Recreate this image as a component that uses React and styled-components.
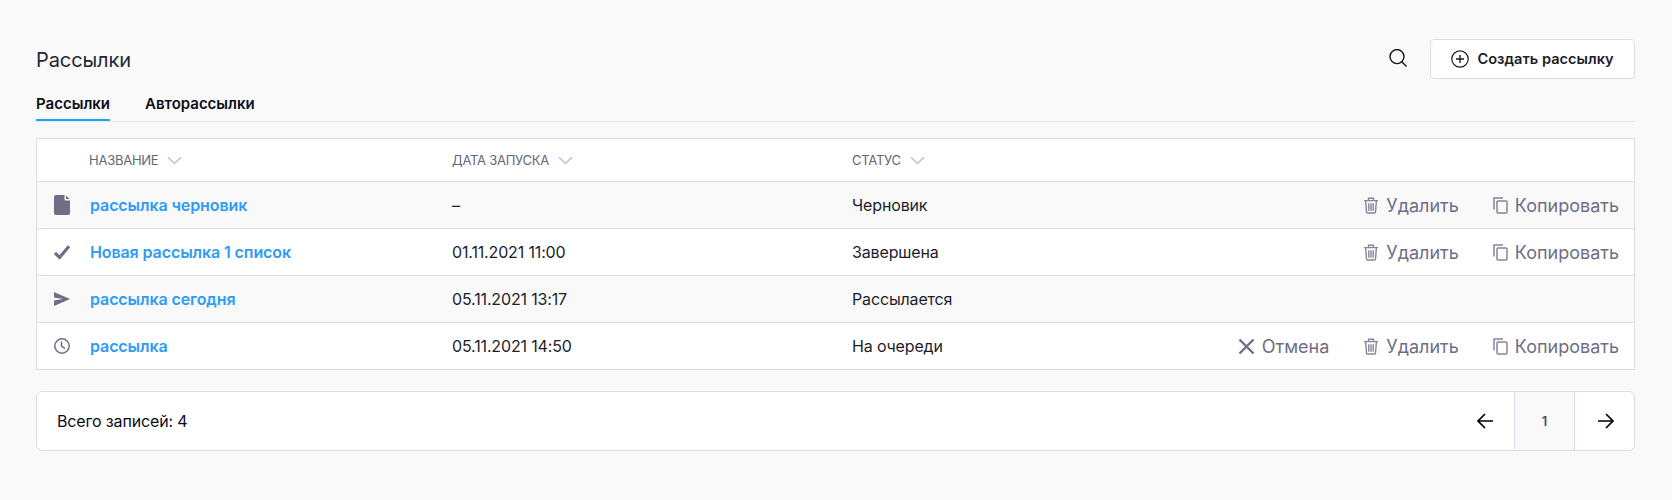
import React from "react";
import styled, { createGlobalStyle } from "styled-components";

const Global = createGlobalStyle`
  html, body { margin: 0; padding: 0; background: #f9f9fa; }
  body { font-family: Inter, "Noto Sans", sans-serif; color: #1d1d2b; }
`;

const Page = styled.div`
  box-sizing: border-box;
  width: 1672px;
  height: 500px;
  padding: 39px 37px 0 36px;
  background: #f9f9fa;
`;
const Head = styled.div`
  display: flex;
  align-items: center;
  height: 40px;
`;
const Title = styled.h1`
  margin: 0;
  padding-top: 2px;
  flex: 1;
  font-size: 20px;
  font-weight: 400;
  letter-spacing: -0.1px;
  line-height: 40px;
  color: #262633;
`;
const SearchBtn = styled.span`
  display: flex;
  margin-right: 23px;
  margin-bottom: 2px;
  color: #111;
`;
const CreateBtn = styled.button`
  box-sizing: border-box;
  width: 205px;
  height: 40px;
  display: flex;
  align-items: center;
  justify-content: center;
  gap: 8px;
  background: #fff;
  border: 1px solid #dcdcea;
  border-radius: 4px;
  font: 600 14.6px Inter, sans-serif;
  color: #1d1d2b;
  padding: 0;
`;
const Tabs = styled.div`
  display: flex;
  gap: 35px;
  height: 42px;
  border-bottom: 1px solid #e7e7ee;
  box-sizing: content-box;
`;
const Tab = styled.div`
  box-sizing: border-box;
  height: 42px;
  padding-top: 15px;
  font-size: 15px;
  font-weight: 600;
  line-height: 20px;
  color: #0c0c14;
  border-bottom: 2px solid ${p => (p.$active ? "#1aa5f5" : "transparent")};
`;
const Table = styled.div`
  margin-top: 16px;
  border: 1px solid #dcdcea;
  background: #fff;
`;
const columns = "52px 363px 400px 1fr";
const HeaderRow = styled.div`
  display: grid;
  grid-template-columns: ${columns};
  height: 42px;
  align-items: center;
`;
const HeadCell = styled.div`
  display: flex;
  align-items: center;
  gap: 9px;
  font-size: 13px;
  letter-spacing: -0.25px;
  color: #656578;
`;
const Row = styled.div`
  display: grid;
  grid-template-columns: ${columns};
  height: 47px;
  align-items: center;
  border-top: 1px solid #dcdcea;
  box-sizing: border-box;
  background: ${p => (p.$odd ? "#f9f9fa" : "#fff")};
  font-size: 16px;
  letter-spacing: -0.15px;
  color: #1d1d2b;
`;
const IconCell = styled.div`
  display: flex;
  justify-content: center;
  padding-right: 2px;
  color: #6e6e85;
`;
const NameLink = styled.a`
  font-weight: 600;
  letter-spacing: -0.1px;
  color: #2d9cf5;
  margin-left: 1px;
`;
const StatusCell = styled.div`
  display: flex;
  align-items: center;
  justify-content: space-between;
`;
const Actions = styled.div`
  display: flex;
  align-items: center;
  gap: 34px;
  padding-right: 15px;
`;
const Action = styled.span`
  display: flex;
  align-items: center;
  gap: 7px;
  font-size: 18px;
  letter-spacing: 0;
  color: #6e6e85;
`;
const Pager = styled.div`
  margin-top: 21px;
  height: 60px;
  box-sizing: border-box;
  display: flex;
  align-items: center;
  background: #fff;
  border: 1px solid #dcdcea;
  border-radius: 6px;
  overflow: hidden;
`;
const Total = styled.div`
  flex: 1;
  padding-left: 20px;
  font-size: 16px;
  letter-spacing: -0.15px;
  color: #0c0c14;
`;
const PageArrow = styled.div`
  box-sizing: border-box;
  width: ${p => (p.$right ? "59px" : "60px")};
  height: 100%;
  display: flex;
  align-items: center;
  justify-content: center;
  padding-left: 2px;
  color: #000;
`;
const PageNum = styled.div`
  box-sizing: border-box;
  width: 61px;
  height: 100%;
  display: flex;
  align-items: center;
  justify-content: center;
  background: #f9f9fa;
  border-left: 1px solid #dcdcea;
  border-right: 1px solid #dcdcea;
  font-size: 13px;
  font-weight: 600;
  color: #4c4c60;
`;

const Chevron = () => (
  <svg width="15" height="9" viewBox="0 0 15 9" fill="none" stroke="#b9c2d6" strokeWidth="1.6">
    <path d="M1 1.2 7.5 7.5 14 1.2" />
  </svg>
);
const DocIcon = () => (
  <svg width="16" height="20" viewBox="0 0 16 20" fill="currentColor">
    <path d="M2 0h8.5v4.5a1 1 0 0 0 1 1H16V18a2 2 0 0 1-2 2H2a2 2 0 0 1-2-2V2a2 2 0 0 1 2-2ZM12 0.4 15.6 4h-3.6Z" />
  </svg>
);
const CheckIcon = () => (
  <svg width="16" height="15" viewBox="0 0 16 15" fill="none" stroke="currentColor" strokeWidth="3.2">
    <path d="M1 8 5.6 12.5 15 1.2" />
  </svg>
);
const SendIcon = () => (
  <svg width="16" height="14" viewBox="0 0 16 14" fill="currentColor">
    <path d="M0 0 16 7 0 14V8.6L9 7 0 5.4Z" />
  </svg>
);
const ClockIcon = () => (
  <svg width="16" height="16" viewBox="0 0 16 16" fill="none" stroke="currentColor" strokeWidth="1.5">
    <circle cx="8" cy="8" r="7.2" />
    <path d="M7.5 3.6V8.2L11 10.6" />
  </svg>
);
const TrashIcon = () => (
  <svg width="16" height="17" viewBox="0 0 16 17" fill="none" stroke="#85859a" strokeWidth="1.4">
    <path d="M1 3.6h14M5.5 3.4V1.2h5v2.2M2.6 3.8l.9 11.2a1 1 0 0 0 1 1h7a1 1 0 0 0 1-1l.9-11.2M5.8 6.2v7.6M8 6.2v7.6M10.2 6.2v7.6" />
  </svg>
);
const CopyIcon = () => (
  <svg width="15" height="17" viewBox="0 0 15 17" fill="none" stroke="#85859a" strokeWidth="1.5">
    <path d="M1 12.5V1h9" />
    <rect x="4" y="4" width="10" height="12" rx="1" />
  </svg>
);
const CrossIcon = () => (
  <svg width="17" height="17" viewBox="0 0 17 17" fill="none" stroke="#6e6e85" strokeWidth="2.4">
    <path d="M1.5 1.5 15.5 15.5M15.5 1.5 1.5 15.5" />
  </svg>
);
const PlusCircle = () => (
  <svg width="18" height="18" viewBox="0 0 18 18" fill="none" stroke="#1d1d2b" strokeWidth="1.2">
    <circle cx="9" cy="9" r="8.2" />
    <path d="M9 5v8M5 9h8" strokeWidth="1.4" />
  </svg>
);
const SearchIcon = () => (
  <svg width="18" height="18" viewBox="0 0 18 18" fill="none" stroke="currentColor" strokeWidth="1.4">
    <circle cx="8" cy="7.6" r="7" />
    <path d="M12.6 12.6 17.5 17.5" />
  </svg>
);
const Arrow = ({ right }) => (
  <svg width="16" height="16" viewBox="0 0 16 16" fill="none" stroke="currentColor" strokeWidth="1.7">
    {right ? <path d="M0 8h15M8 1l7 7-7 7" /> : <path d="M16 8H1M8 1 1 8l7 7" />}
  </svg>
);

const Del = () => <Action><TrashIcon />Удалить</Action>;
const Copy = () => <Action><CopyIcon />Копировать</Action>;
const Cancel = () => <Action><CrossIcon />Отмена</Action>;

const rows = [
  { icon: <DocIcon />, name: "рассылка черновик", date: "–", status: "Черновик", acts: ["d", "c"] },
  { icon: <CheckIcon />, name: "Новая рассылка 1 список", date: "01.11.2021 11:00", status: "Завершена", acts: ["d", "c"] },
  { icon: <SendIcon />, name: "рассылка сегодня", date: "05.11.2021 13:17", status: "Рассылается", acts: [] },
  { icon: <ClockIcon />, name: "рассылка", date: "05.11.2021 14:50", status: "На очереди", acts: ["x", "d", "c"] },
];
const actionMap = { d: Del, c: Copy, x: Cancel };

export default function App() {
  return (
    <Page>
      <Global />
      <Head>
        <Title>Рассылки</Title>
        <SearchBtn><SearchIcon /></SearchBtn>
        <CreateBtn><PlusCircle />Создать рассылку</CreateBtn>
      </Head>
      <Tabs>
        <Tab $active>Рассылки</Tab>
        <Tab>Авторассылки</Tab>
      </Tabs>
      <Table>
        <HeaderRow>
          <span />
          <HeadCell>НАЗВАНИЕ <Chevron /></HeadCell>
          <HeadCell>ДАТА ЗАПУСКА <Chevron /></HeadCell>
          <HeadCell>СТАТУС <Chevron /></HeadCell>
        </HeaderRow>
        {rows.map((r, i) => (
          <Row key={r.name} $odd={i % 2 === 0}>
            <IconCell>{r.icon}</IconCell>
            <div><NameLink>{r.name}</NameLink></div>
            <div>{r.date}</div>
            <StatusCell>
              <span>{r.status}</span>
              <Actions>
                {r.acts.map(a => {
                  const C = actionMap[a];
                  return <C key={a} />;
                })}
              </Actions>
            </StatusCell>
          </Row>
        ))}
      </Table>
      <Pager>
        <Total>Всего записей: 4</Total>
        <PageArrow><Arrow /></PageArrow>
        <PageNum>1</PageNum>
        <PageArrow $right><Arrow right /></PageArrow>
      </Pager>
    </Page>
  );
}
